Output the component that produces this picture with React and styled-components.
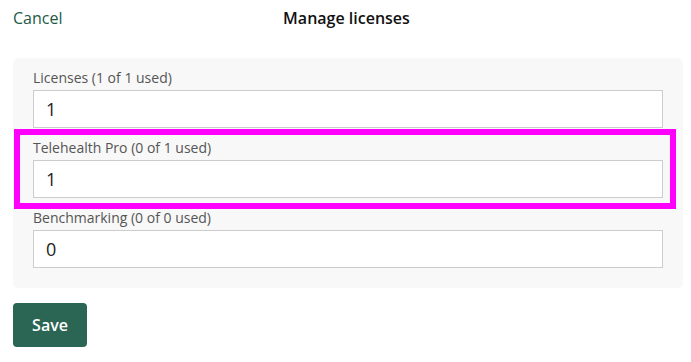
import React from "react";
import styled, { createGlobalStyle } from "styled-components";

const Global = createGlobalStyle`
  html, body { margin: 0; padding: 0; background: #ffffff; }
  body { font-family: "Open Sans", "Liberation Sans", sans-serif; color: #222; }
  * { box-sizing: border-box; }
`;

const Page = styled.div`
  width: 691px;
  padding: 0 8px 0 13px;
`;

const Header = styled.div`
  display: grid;
  grid-template-columns: 1fr auto 1fr;
  align-items: center;
  height: 36px;
  padding-right: 5px;
`;

const CancelLink = styled.a`
  font-size: 16px;
  color: #1d5a46;
  text-decoration: none;
  cursor: pointer;
  justify-self: start;
  line-height: 22px;
`;

const Title = styled.h1`
  margin: 0;
  font-size: 16px;
  font-weight: 600;
  color: #111;
  line-height: 22px;
  padding-left: 2px;
`;

const Panel = styled.div`
  margin-top: 22px;
  background: #f8f8f8;
  border-radius: 5px;
  padding: 10px 20px 20px 20px;
  display: flex;
  flex-direction: column;
  gap: 10px;
`;

const Field = styled.div`
  position: relative;
  display: flex;
  flex-direction: column;
  gap: 2px;

  ${(p) =>
    p.$highlight &&
    `
    &::after {
      content: "";
      position: absolute;
      top: -9px;
      left: -19px;
      right: -13px;
      bottom: -11px;
      border: 6px solid #ff00ff;
      pointer-events: none;
    }
  `}
`;

const Label = styled.label`
  font-size: 14px;
  line-height: 20px;
  color: #555;
`;

const Input = styled.input`
  height: 38px;
  width: 100%;
  border: 1px solid #cccccc;
  background: #ffffff;
  padding: 0 12px;
  font-family: "Open Sans", "Liberation Sans", sans-serif;
  font-size: 18px;
  color: #222;
  outline: none;
  border-radius: 0;
`;

const SaveButton = styled.button`
  margin-top: 15px;
  width: 74px;
  height: 44px;
  background: #2b6654;
  border: none;
  border-radius: 4px;
  color: #ffffff;
  font-family: "Open Sans", "Liberation Sans", sans-serif;
  font-size: 16px;
  font-weight: 600;
  cursor: pointer;
`;

const fields = [
  { label: "Licenses (1 of 1 used)", value: "1" },
  { label: "Telehealth Pro (0 of 1 used)", value: "1", highlight: true },
  { label: "Benchmarking (0 of 0 used)", value: "0" },
];

export default function App() {
  return (
    <>
      <Global />
      <Page>
        <Header>
          <CancelLink>Cancel</CancelLink>
          <Title>Manage licenses</Title>
          <span />
        </Header>
        <Panel>
          {fields.map((f) => (
            <Field key={f.label} $highlight={f.highlight}>
              <Label>{f.label}</Label>
              <Input defaultValue={f.value} readOnly />
            </Field>
          ))}
        </Panel>
        <SaveButton>Save</SaveButton>
      </Page>
    </>
  );
}
